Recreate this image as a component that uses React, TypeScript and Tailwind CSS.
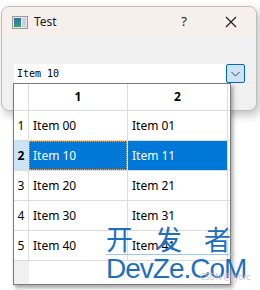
import React from 'react';

const font = { fontFamily: '"Noto Sans", "Liberation Sans", sans-serif' };

const rows = [
  ['Item 00', 'Item 01'],
  ['Item 10', 'Item 11'],
  ['Item 20', 'Item 21'],
  ['Item 30', 'Item 31'],
  ['Item 40', 'Item 41'],
];

function AppIcon() {
  return (
    <svg width="16" height="13" viewBox="0 0 16 13">
      <rect x="0.5" y="0.5" width="15" height="12" fill="#e8e8e8" stroke="#9a9a9a" />
      <defs>
        <linearGradient id="g" x1="0" y1="0" x2="0" y2="1">
          <stop offset="0" stopColor="#2f6fb5" />
          <stop offset="1" stopColor="#3aa070" />
        </linearGradient>
      </defs>
      <rect x="2" y="2" width="7" height="9" fill="url(#g)" />
      <rect x="10" y="2" width="4" height="9" fill="#c9d3dc" />
    </svg>
  );
}

function App() {
  return (
    <div className="relative w-[260px] h-[290px] bg-white overflow-hidden" style={font}>
      {/* Dialog window */}
      <div className="ml-[1px] mt-[6px] w-[256px] h-[105px] rounded-[8px] border border-[#bdbdbd] bg-[#f0f0f0] overflow-hidden shadow-[3px_4px_10px_rgba(0,0,0,0.25)]">
        <div className="h-[30px] bg-[#f7efec] flex items-center pl-[10px] text-[12px] text-[#1a1a1a]">
          <AppIcon />
          <span className="ml-[6px]">Test</span>
          <span className="ml-auto mr-[38px] text-[13px]">?</span>
          <svg width="12" height="12" viewBox="0 0 12 12" className="mr-[19px]">
            <path d="M1 1 L11 11 M11 1 L1 11" stroke="#1a1a1a" strokeWidth="1.1" />
          </svg>
        </div>
        <div className="pt-[27px] pl-[12px] flex">
          <div className="w-[212px] h-[19px] bg-white flex items-center pl-[3px] text-[10px] text-black" style={{ fontFamily: '"DejaVu Sans Mono", monospace' }}>
            Item 10
          </div>
          <div className="w-[19px] h-[19px] bg-[#cce4f7] border border-[#0067c0] rounded-[2px] flex items-center justify-center">
            <svg width="9" height="6" viewBox="0 0 9 6">
              <path d="M0.5 1 L4.5 5 L8.5 1" fill="none" stroke="#404040" strokeWidth="1" />
            </svg>
          </div>
        </div>
      </div>

      {/* Popup table */}
      <div className="absolute left-[13px] top-[83px] w-[218px] h-[202px] bg-white border border-[#7a7a7a] shadow-[2px_3px_4px_rgba(0,0,0,0.35)] flex flex-col">
        <div className="flex h-[27px] border-b border-[#dcdcdc] text-[12px] font-bold text-black">
          <div className="w-[15px] border-r border-[#dcdcdc]"></div>
          <div className="w-[99px] border-r border-[#dcdcdc] flex items-center justify-center">1</div>
          <div className="w-[100px] border-r border-[#dcdcdc] flex items-center justify-center">2</div>
        </div>
        {rows.map((r, i) => {
          const sel = i === 1;
          return (
            <div key={i} className="flex h-[30px] border-b border-[#dcdcdc] text-[12px]">
              <div className={`w-[15px] border-r border-[#dcdcdc] flex items-center justify-center text-black ${sel ? 'bg-[#cce4f7] font-bold' : ''}`}>
                {i + 1}
              </div>
              <div className={`w-[99px] border-r border-[#dcdcdc] flex items-center ${sel ? 'bg-[#0078d7] text-white' : 'text-black'}`}>
                <div className={`w-full h-full flex items-center pl-[3px] ${sel ? 'border border-dotted border-[#f0a040]' : 'pl-[4px]'}`}>{r[0]}</div>
              </div>
              <div className={`w-[100px] border-r border-[#dcdcdc] flex items-center pl-[4px] ${sel ? 'bg-[#0078d7] text-white' : 'text-black'}`}>
                {r[1]}
              </div>
            </div>
          );
        })}
        <div className="flex flex-1">
          <div className="w-[15px] bg-[#f0f0f0]"></div>
          <div className="flex-1"></div>
        </div>
      </div>

      {/* Watermark */}
      <div className="absolute left-[106px] top-[224px] pointer-events-none text-[#1f6fc0]">
        <div className="text-[27px] leading-[30px] tracking-[22px] border-b border-[#9cc6ee] w-[128px] whitespace-nowrap" style={{ fontFamily: '"Noto Sans CJK SC", sans-serif' }}>
          开发者
        </div>
        <div className="text-[28px] leading-[27px] tracking-[-1px] whitespace-nowrap" style={{ fontFamily: '"Liberation Sans", sans-serif' }}>
          DevZe.CoM
        </div>
      </div>
      <div className="absolute left-[200px] top-[271px] text-[8px] text-[#c8c8c8] whitespace-nowrap pointer-events-none">
        CSDN @zyorc
      </div>
    </div>
  );
}

export default App;
